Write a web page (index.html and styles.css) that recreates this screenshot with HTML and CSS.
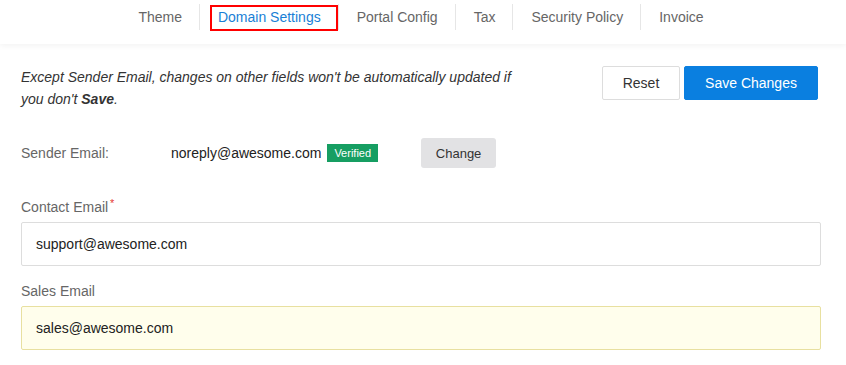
FILE: index.html
```html
<!DOCTYPE html>
<html lang="en">
<head>
    <meta charset="UTF-8">
    <meta name="viewport" content="width=device-width, initial-scale=1.0">
    <title>Domain Settings</title>
    <link rel="stylesheet" href="styles.css">
</head>
<body>
    <nav class="tabs">
        <a class="tab" href="#">Theme</a>
        <a class="tab active" href="#">Domain Settings</a>
        <a class="tab" href="#">Portal Config</a>
        <a class="tab" href="#">Tax</a>
        <a class="tab" href="#">Security Policy</a>
        <a class="tab" href="#">Invoice</a>
    </nav>

    <main class="content">
        <div class="info-row">
            <p class="notice">Except Sender Email, changes on other fields won't be automatically updated if you don't <b>Save</b>.</p>
            <div class="actions">
                <button class="btn btn-default">Reset</button>
                <button class="btn btn-primary">Save Changes</button>
            </div>
        </div>

        <div class="sender-row">
            <span class="sender-label">Sender Email:</span>
            <span class="sender-value">noreply@awesome.com</span>
            <span class="badge">Verified</span>
            <button class="btn btn-gray">Change</button>
        </div>

        <div class="field">
            <label class="field-label" for="contact">Contact Email <span class="required">*</span></label>
            <input class="input" id="contact" type="text" value="support@awesome.com">
        </div>

        <div class="field">
            <label class="field-label" for="sales">Sales Email</label>
            <input class="input input-highlight" id="sales" type="text" value="sales@awesome.com">
        </div>
    </main>
</body>
</html>
```

FILE: styles.css
```css
body {
    margin: 0;
    font-family: "Liberation Sans", Arial, sans-serif;
    font-size: 14px;
    color: #333;
    background: #fff;
}
.tabs {
    display: flex;
    justify-content: center;
    height: 44px;
    padding: 4px 5px 0 0;
    box-sizing: border-box;
    background: #fff;
    box-shadow: 0 2px 6px rgba(0, 0, 0, 0.05);
}
.tab {
    position: relative;
    height: 26px;
    line-height: 26px;
    padding: 0 17px 0 18px;
    color: #666;
    text-decoration: none;
    border-left: 1px solid #e6e6e6;
}
.tab:first-child {
    border-left: none;
}
.tab.active {
    color: #1a7fd6;
}
.tab.active::after {
    content: "";
    position: absolute;
    top: 1px;
    left: 10px;
    right: 0;
    height: 26px;
    border: 2px solid #f00;
    box-sizing: border-box;
}
.content {
    padding: 22px 25px 0 21px;
}
.info-row {
    display: flex;
    justify-content: space-between;
    align-items: flex-start;
}
.notice {
    margin: 0;
    width: 505px;
    font-style: italic;
    line-height: 22px;
}
.notice b {
    font-weight: bold;
}
.actions {
    display: flex;
    gap: 4px;
    margin-right: 3px;
}
.btn {
    font-family: inherit;
    font-size: 14px;
    height: 34px;
    border-radius: 2px;
    cursor: pointer;
}
.btn-default {
    width: 78px;
    background: #fff;
    color: #333;
    border: 1px solid #ddd;
}
.btn-primary {
    width: 134px;
    background: #0a7fe0;
    color: #fff;
    border: 1px solid #0a7fe0;
}
.btn-gray {
    height: 30px;
    width: 75px;
    margin-left: 43px;
    background: #e2e2e4;
    color: #333;
    border: none;
    border-radius: 3px;
    font-size: 13px;
}
.sender-row {
    display: flex;
    align-items: center;
    margin-top: 28px;
}
.sender-label {
    width: 150px;
    color: #666;
}
.sender-value {
    color: #222;
}
.badge {
    margin-left: 6px;
    height: 18px;
    line-height: 18px;
    padding: 0 7px;
    background: #169e62;
    color: #fff;
    font-size: 11px;
}
.field {
    margin-top: 29px;
}
.field + .field {
    margin-top: 15px;
}
.field-label {
    display: block;
    height: 20px;
    line-height: 20px;
    margin-bottom: 5px;
    color: #666;
}
.required {
    position: relative;
    top: -5px;
    margin-left: -2px;
    color: #e53935;
    font-size: 11px;
}
.input {
    display: block;
    width: 100%;
    height: 44px;
    box-sizing: border-box;
    padding: 0 14px;
    font-family: inherit;
    font-size: 14px;
    color: #222;
    background: #fff;
    border: 1px solid #ddd;
    border-radius: 2px;
    outline: none;
}
.input-highlight {
    background: #fffeec;
    border-color: #e8e0a0;
}
```
